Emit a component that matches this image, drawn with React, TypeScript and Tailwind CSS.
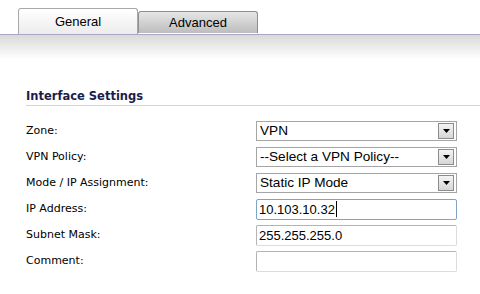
import React from 'react';

const labelFont = { fontFamily: '"DejaVu Sans", Verdana, sans-serif' };
const fieldFont = { fontFamily: '"Liberation Sans", Arial, sans-serif' };

function Select({ value }: { value: string }) {
  return (
    <div className="flex h-[20px] w-[201px] items-center border border-[#a5a5a5] bg-white pl-[3px] pr-[2px]">
      <span className="flex-1 text-[13.6px] leading-none text-black" style={fieldFont}>
        {value}
      </span>
      <div className="flex h-[16px] w-[16px] items-center justify-center border border-[#8c8c8c] bg-gradient-to-b from-[#f4f4f4] to-[#d6d6d6]">
        <svg width="7" height="4" viewBox="0 0 7 4">
          <path d="M0 0h7L3.5 4z" fill="#000" />
        </svg>
      </div>
    </div>
  );
}

function TextInput({ value, focused }: { value: string; focused?: boolean }) {
  return (
    <div
      className={`flex h-[21px] w-[201px] items-center rounded-[2px] border bg-white pl-[2px] ${
        focused ? 'border-[#7ea4c8]' : 'border-[#b4b4b4] border-b-[#dcdcdc] border-r-[#dcdcdc]'
      }`}
    >
      <span className="text-[13px] leading-none text-black" style={fieldFont}>
        {value}
      </span>
      {focused && <span className="ml-[1px] h-[16px] w-px bg-black" />}
    </div>
  );
}

const rows: { label: string; field: React.ReactNode }[] = [
  { label: 'Zone:', field: <Select value="VPN" /> },
  { label: 'VPN Policy:', field: <Select value="--Select a VPN Policy--" /> },
  { label: 'Mode / IP Assignment:', field: <Select value="Static IP Mode" /> },
  { label: 'IP Address:', field: <TextInput value="10.103.10.32" focused /> },
  { label: 'Subnet Mask:', field: <TextInput value="255.255.255.0" /> },
  { label: 'Comment:', field: <TextInput value="" /> },
];

export default function App() {
  return (
    <div className="h-[294px] w-[480px] overflow-hidden bg-white">
      {/* tabs */}
      <div className="flex h-[34px] items-end pl-[18px]">
        <div
          className="flex h-[26px] w-[120px] items-center justify-center rounded-t-[3px] border border-b-0 border-[#a8a8a8] bg-gradient-to-b from-white to-[#ececec] text-[13px] text-black"
          style={fieldFont}
        >
          General
        </div>
        <div
          className="mb-[1px] flex h-[22px] w-[120px] items-center justify-center rounded-t-[3px] border border-b-0 border-[#8f8f8f] bg-gradient-to-b from-[#e6e6e6] to-[#bdbdbd] text-[13px] text-black"
          style={fieldFont}
        >
          Advanced
        </div>
      </div>
      <div className="h-px bg-[#aaa6c6]" />
      <div className="h-[24px] bg-gradient-to-b from-[#d9d9d9] to-white" />

      <div className="pl-[26px] pt-[30px]">
        <div
          className="border-b border-[#c6d8e6] pb-[2px] text-[11.5px] font-bold leading-[14px] text-[#1c1c4c]"
          style={labelFont}
        >
          Interface Settings
        </div>
        <div className="mt-[12px] flex flex-col">
          {rows.map((r) => (
            <div key={r.label} className="flex h-[26px] items-center">
              <div className="w-[230px] text-[11px] text-black" style={labelFont}>
                {r.label}
              </div>
              {r.field}
            </div>
          ))}
        </div>
      </div>
    </div>
  );
}
